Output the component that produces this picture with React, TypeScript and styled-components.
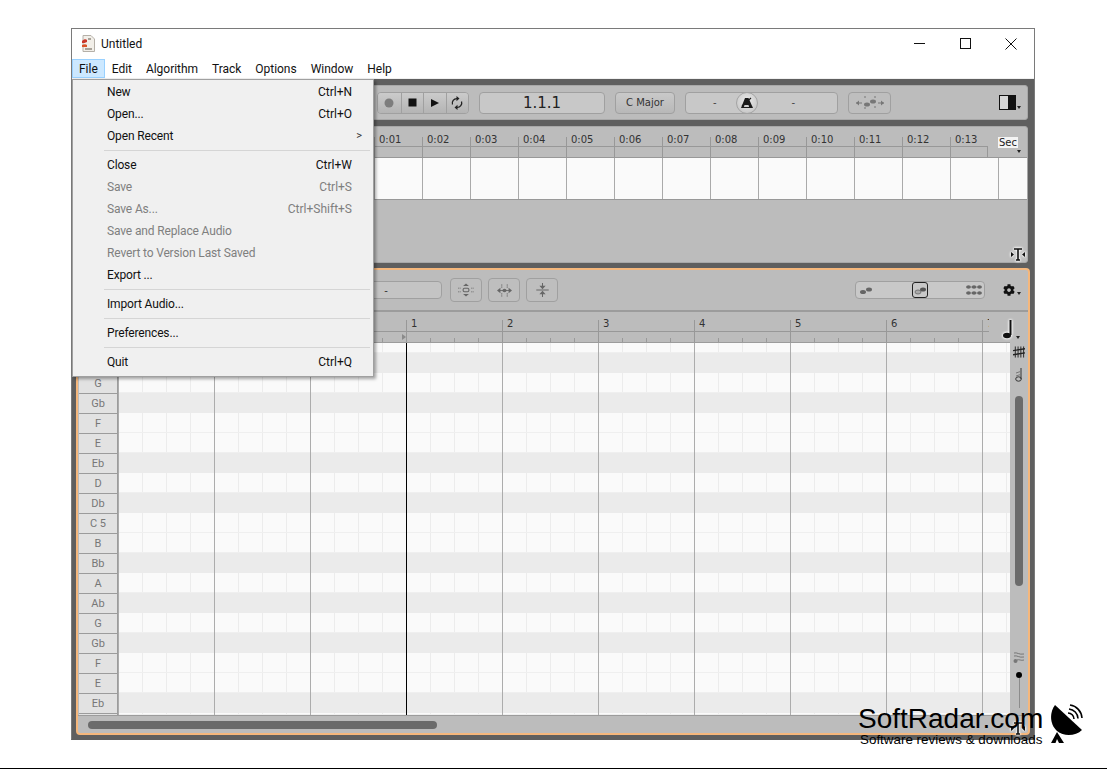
import React from 'react'
import styled, { createGlobalStyle } from 'styled-components'
import { FaCog } from 'react-icons/fa'

const GlobalStyle = createGlobalStyle`
    html, body { margin: 0; padding: 0; background: #fff; }
    body { font-family: Roboto, "Noto Sans", sans-serif; }
    * { box-sizing: border-box; }
`

const RULER_FONT = '"DejaVu Sans", sans-serif'

const Page = styled.div`
    position: relative;
    width: 1107px;
    height: 769px;
    padding: 28px 0 0 71px;
    overflow: hidden;
    border-bottom: 1px solid #000;
`
const Window = styled.div`
    position: relative;
    width: 964px;
    height: 712px;
    display: flex;
    flex-direction: column;
    border: 1px solid #7a7a7a;
    border-bottom-color: #5f5f5f;
    background: #fff;
`
const TitleBar = styled.div`
    height: 29px;
    display: flex;
    align-items: center;
    padding-left: 9px;
    font-size: 12px;
    color: #111;
`
const TitleText = styled.span`
    margin-left: 6px;
    flex: 1;
`
const WinButton = styled.div`
    width: 46px;
    height: 29px;
    display: flex;
    align-items: center;
    justify-content: center;
`
const MenuBar = styled.div`
    height: 21px;
    display: flex;
    align-items: flex-start;
    padding-top: 1px;
    font-size: 12px;
    letter-spacing: -0.03px;
    color: #111;
    border-bottom: 1px solid #f0f0f0;
`
const MenuTitle = styled.div<{ $open?: boolean }>`
    height: 19px;
    line-height: 18px;
    padding: 0 6px;
    border: 1px solid ${p => (p.$open ? '#99d1ff' : 'transparent')};
    background: ${p => (p.$open ? '#cce8ff' : 'transparent')};
`
const Workspace = styled.div`
    flex: 1;
    min-height: 0;
    display: flex;
    flex-direction: column;
    background: #5f5f5f;
    padding: 6px 6px 4px 5px;
`
const Panel = styled.div`
    background: #bcbcbc;
    border: 1px solid #a8a8a8;
    border-radius: 3px;
`
const Transport = styled(Panel)`
    height: 35px;
    display: flex;
    align-items: center;
    padding-left: 299px;
`
const ButtonGroup = styled.div`
    display: flex;
    height: 22px;
    border: 1px solid #a0a0a0;
    border-radius: 4px;
    overflow: hidden;
`
const GroupButton = styled.div`
    width: 22.500px;
    display: flex;
    align-items: center;
    justify-content: center;
    background: linear-gradient(#cbcbcb, #b4b4b4);
    & + & { border-left: 1px solid #a0a0a0; }
`
const Field = styled.div<{ $w: number; $ml: number }>`
    width: ${p => p.$w}px;
    margin-left: ${p => p.$ml}px;
    height: 22px;
    display: flex;
    align-items: center;
    justify-content: center;
    background: #c8c8c8;
    border: 1px solid #a0a0a0;
    border-radius: 4px;
    font-family: ${RULER_FONT};
    font-size: 10px;
    color: #333;
`
const PositionField = styled(Field)`
    font-size: 15px;
    color: #222;
`
const KeyField = styled(Field)`
    background: linear-gradient(#c9c9c9, #b8b8b8);
`
const TempoField = styled(Field)`
    justify-content: flex-start;
`
const Dash = styled.span<{ $l: number; $r: number }>`
    margin: 0 ${p => p.$r}px 0 ${p => p.$l}px;
    color: #444;
`
const Knob = styled.div`
    width: 22px;
    height: 22px;
    flex: none;
    border-radius: 50%;
    border: 1px solid #a4a4a4;
    background: radial-gradient(circle at 50% 40%, #ececec, #bdbdbd);
    display: flex;
    align-items: center;
    justify-content: center;
`
const ToolButton = styled.div<{ $w?: number; $h?: number; $ml: number }>`
    width: ${p => p.$w ?? 32}px;
    height: ${p => p.$h ?? 24}px;
    margin-left: ${p => p.$ml}px;
    display: flex;
    align-items: center;
    justify-content: center;
    border: 1px solid #a0a0a0;
    border-radius: 4px;
    background: #bebebe;
`
const PanelToggle = styled.div`
    margin-left: auto;
    margin-right: 6px;
    display: flex;
    align-items: flex-end;
    gap: 1px;
`
const Caret = styled.span`
    width: 0;
    height: 0;
    margin-bottom: 1px;
    border-left: 2.5px solid transparent;
    border-right: 2.5px solid transparent;
    border-top: 3px solid #222;
`
const Timeline = styled(Panel)`
    height: 137px;
    margin-top: 6px;
    display: flex;
    flex-direction: column;
`
const TimeRulerRow = styled.div`
    height: 30px;
    display: flex;
    padding-left: 296px;
`
const RulerCell = styled.div<{ $w: number; $top: number }>`
    position: relative;
    width: ${p => p.$w}px;
    flex: none;
    margin-top: ${p => p.$top}px;
    display: flex;
    flex-direction: column;
    border-left: 1px solid #989898;
    font-family: ${RULER_FONT};
    font-size: 10px;
    color: #333;
`
const CellLabel = styled.div<{ $h: number }>`
    height: ${p => p.$h}px;
    line-height: ${p => p.$h - 4}px;
    padding-left: 4px;
    white-space: nowrap;
`
const TickRow = styled.div<{ $ticks?: boolean; $end?: boolean }>`
    flex: 1;
    border-top: 1px solid #989898;
    border-right: ${p => (p.$end ? '1px solid #989898' : 'none')};
    ${p =>
        p.$ticks
            ? `background: linear-gradient(to right, transparent 23px, #999 23px) left bottom / 24px 4px repeat-x;`
            : ''}
`
const SecBox = styled.div`
    position: relative;
    flex: none;
    margin: 10px 0 0 10px;
    width: 20px;
    height: 11px;
    line-height: 11px;
    text-align: center;
    background: #f4f4f4;
    font-family: ${RULER_FONT};
    font-size: 10px;
    color: #222;
`
const SecCaret = styled(Caret)`
    position: absolute;
    right: -3px;
    top: 13px;
`
const AudioStrip = styled.div`
    height: 43px;
    background: #fafafa linear-gradient(to right, #aaa 1px, transparent 1px) 8px 0 / 48px 100% repeat-x;
    border-top: 1px solid #989898;
    border-bottom: 1px solid #989898;
`
const TimelineRest = styled.div`
    flex: 1;
    display: flex;
    justify-content: flex-end;
    align-items: flex-end;
    padding: 0 1px 0 0;
`
const Editor = styled.div`
    height: 467px;
    margin: 5px -2px 0 -1px;
    display: flex;
    flex-direction: column;
    background: #bcbcbc;
    border: 2px solid #f5b77c;
    border-radius: 4px;
`
const EditorBar = styled.div`
    height: 42px;
    flex: none;
    display: flex;
    align-items: center;
    border-bottom: 2px solid #9c9c9c;
`
const VelocityField = styled(Field)`
    height: 18px;
    background: #c4c4c4;
`
const ZoomSlider = styled.div`
    position: relative;
    margin-left: auto;
    width: 130px;
    height: 18px;
    background: #c8c8c8;
    border: 1px solid #a0a0a0;
    border-radius: 4px;
    display: flex;
    align-items: center;
    justify-content: space-between;
    padding: 0 2px 0 4px;
`
const SliderThumb = styled.div`
    position: absolute;
    left: 56px;
    top: 0;
    width: 16px;
    height: 16px;
    border: 1px solid #222;
    border-radius: 3px;
    display: flex;
    align-items: center;
    justify-content: center;
`
const GearWrap = styled.div`
    width: 43px;
    padding-left: 18px;
    display: flex;
    align-items: flex-end;
    gap: 2px;
    color: #111;
    font-size: 12px;
`
const BeatRulerRow = styled.div`
    height: 30px;
    flex: none;
    display: flex;
    padding-left: 40px;
`
const BeatRuler = styled.div`
    width: 871px;
    display: flex;
    overflow: hidden;
    flex: none;
`
const LoopMark = styled.span`
    position: absolute;
    right: 0;
    bottom: 2px;
    border-left: 4px solid #8a8a8a;
    border-top: 3px solid transparent;
    border-bottom: 3px solid transparent;
`
const NoteButton = styled.div`
    margin: 7px 0 0 13px;
    display: flex;
    align-items: flex-end;
    gap: 3px;
    height: 21px;
`
const EditorBody = styled.div`
    flex: 1;
    min-height: 0;
    display: flex;
`
const KeyColumn = styled.div`
    width: 40px;
    flex: none;
    padding-left: 1px;
    border-right: 1px solid #9c9c9c;
    border-top: 1px solid #9c9c9c;
    overflow: hidden;
    display: flex;
    flex-direction: column;
`
const PianoKey = styled.div<{ $h: number }>`
    height: ${p => p.$h}px;
    flex: none;
    display: flex;
    align-items: center;
    justify-content: center;
    background: #e2e2e2;
    border-bottom: 1px solid #9c9c9c;
    font-size: 11px;
    color: #777;
`
const Grid = styled.div`
    position: relative;
    width: 892px;
    flex: none;
    overflow: hidden;
    border-top: 1px solid #9c9c9c;
    display: flex;
    flex-direction: column;
    &::after {
        content: '';
        position: absolute;
        inset: 0;
        background: linear-gradient(to right, #acacac 1px, transparent 1px) 0 0 / 96px 100% repeat-x;
    }
`
const Stripe = styled.div<{ $h: number; $dark: boolean }>`
    height: ${p => p.$h}px;
    flex: none;
    background: ${p =>
        p.$dark
            ? '#ebebeb'
            : '#fafafa linear-gradient(to right, #ececec 1px, transparent 1px) 0 0 / 24px 100% repeat-x'};
    border-bottom: ${p => (p.$dark ? 'none' : '1px solid #efefef')};
`
const Playhead = styled.div`
    position: absolute;
    z-index: 1;
    left: 288px;
    top: 0;
    bottom: 0;
    width: 1px;
    background: #000;
`
const SideStrip = styled.div`
    flex: 1;
    display: flex;
    flex-direction: column;
    align-items: center;
    padding: 4px 0 7px 0;
    line-height: 0;
`
const SideIcon = styled.div<{ $mt: number }>`
    margin-top: ${p => p.$mt}px;
`
const VScroll = styled.div`
    width: 8px;
    height: 190px;
    margin-top: 14px;
    border-radius: 4px;
    background: #6b6b6b;
`
const VolumeDot = styled.div`
    width: 6px;
    height: 6px;
    margin-top: 8px;
    flex: none;
    border-radius: 50%;
    background: #000;
`
const VolumeLine = styled.div`
    flex: 1;
    width: 1px;
    background: #8c8c8c;
`
const EditorFoot = styled.div`
    height: 18px;
    flex: none;
    display: flex;
    justify-content: space-between;
    padding: 5px 2px 0 10px;
    border-top: 1px solid #9c9c9c;
`
const HScroll = styled.div`
    width: 349px;
    height: 8px;
    border-radius: 4px;
    background: #6b6b6b;
`
const Dropdown = styled.div`
    position: absolute;
    z-index: 5;
    left: 0;
    top: 50px;
    width: 302px;
    padding: 0 0 4px;
    background: #f0f0f0;
    border: 1px solid #a0a0a0;
    box-shadow: 2px 2px 3px rgba(0, 0, 0, 0.35);
    font-size: 12px;
`
const Item = styled.div<{ $off?: boolean }>`
    height: 22px;
    display: flex;
    align-items: center;
    justify-content: space-between;
    padding: 1px 21px 0 34px;
    color: ${p => (p.$off ? '#7f7f7f' : '#111')};
`
const ItemLabel = styled.span`
    letter-spacing: -0.15px;
`
const Chevron = styled.span`
    margin-right: -10px;
    font-size: 11px;
    color: #333;
`
const MenuSep = styled.div`
    height: 1px;
    margin: 4px 3px 2px 31px;
    background: #d5d5d5;
`
const Watermark = styled.div`
    position: absolute;
    z-index: 6;
    left: 858px;
    top: 703px;
    display: flex;
    font-family: "Liberation Sans", Arial, sans-serif;
    color: #000;
    line-height: 1;
`
const MarkText = styled.div`
    width: 192px;
`
const MarkTitle = styled.div`
    font-size: 28px;
    height: 28px;
    margin-top: 2px;
`
const MarkSub = styled.div`
    font-size: 13.400px;
    margin: 0 0 0 2px;
    white-space: nowrap;
`

const MENUS = ['Edit', 'Algorithm', 'Track', 'Options', 'Window', 'Help']

type Row = { label: string; keys?: string; off?: boolean; sub?: boolean } | 'sep'

const FILE_MENU: Row[] = [
    { label: 'New', keys: 'Ctrl+N' },
    { label: 'Open...', keys: 'Ctrl+O' },
    { label: 'Open Recent', sub: true },
    'sep',
    { label: 'Close', keys: 'Ctrl+W' },
    { label: 'Save', keys: 'Ctrl+S', off: true },
    { label: 'Save As...', keys: 'Ctrl+Shift+S', off: true },
    { label: 'Save and Replace Audio', off: true },
    { label: 'Revert to Version Last Saved', off: true },
    { label: 'Export ...' },
    'sep',
    { label: 'Import Audio...' },
    'sep',
    { label: 'Preferences...' },
    'sep',
    { label: 'Quit', keys: 'Ctrl+Q' },
]

const TIMES = ['0:01', '0:02', '0:03', '0:04', '0:05', '0:06', '0:07', '0:08', '0:09', '0:10', '0:11', '0:12', '0:13']
const BARS = ['', '', '', '1', '2', '3', '4', '5', '6', '7']

// from the top of the visible roll: [name, height of the stripe, is black key]
const KEYS: [string, number, boolean][] = [
    ['', 10, false], ['Ab', 20, true], ['G', 20, false], ['Gb', 20, true], ['F', 20, false], ['E', 20, false],
    ['Eb', 20, true], ['D', 20, false], ['Db', 20, true], ['C 5', 20, false], ['B', 20, false], ['Bb', 20, true],
    ['A', 20, false], ['Ab', 20, true], ['G', 20, false], ['Gb', 20, true], ['F', 20, false], ['E', 20, false],
    ['Eb', 20, true], ['', 2, false],
]

const HALO = { filter: 'drop-shadow(0 0 1px #fff) drop-shadow(0 0 1px #fff)' }

const SplitIcon = () => (
    <svg width="16" height="15" viewBox="0 0 16 15" style={HALO}>
        <path d="M4 2h8M8 2v11M6 13h4" stroke="#111" strokeWidth="1.6" fill="none" />
        <path d="M1 5l3 2.500L1 10zM15 5l-3 2.500 3 2.500z" fill="#111" />
    </svg>
)

function App() {
    return (
        <Page>
            <GlobalStyle />
            <Window>
                <TitleBar>
                    <svg width="14" height="17" viewBox="0 0 14 17">
                        <path d="M2 .5h8l3.500 3.500v12.500H2z" fill="#f2efe9" stroke="#b5b0a8" />
                        <path d="M1 6c2-2 4-2 5-1v2c-2 1-3 1-5 1z" fill="#c9382c" />
                        <path d="M1 10c2-1 4-1 5 0v2H1z" fill="#d9542b" />
                        <path d="M7 3h3v2H7zM4 13h7v2H4z" fill="#a9a39a" />
                    </svg>
                    <TitleText>Untitled</TitleText>
                    <WinButton>
                        <svg width="11" height="11"><path d="M0 5.500h11" stroke="#111" /></svg>
                    </WinButton>
                    <WinButton>
                        <svg width="11" height="11"><rect x=".5" y=".5" width="10" height="10" fill="none" stroke="#111" /></svg>
                    </WinButton>
                    <WinButton>
                        <svg width="12" height="12"><path d="M.5.500l11 11M11.500.500l-11 11" stroke="#111" /></svg>
                    </WinButton>
                </TitleBar>
                <MenuBar>
                    <MenuTitle $open>File</MenuTitle>
                    {MENUS.map(m => <MenuTitle key={m}>{m}</MenuTitle>)}
                </MenuBar>
                <Workspace>
                    <Transport>
                        <ButtonGroup>
                            <GroupButton>
                                <svg width="10" height="10"><circle cx="5" cy="5" r="4.500" fill="#7d7d7d" /></svg>
                            </GroupButton>
                            <GroupButton>
                                <svg width="9" height="9"><rect width="8" height="8" x=".5" y=".5" fill="#111" /></svg>
                            </GroupButton>
                            <GroupButton>
                                <svg width="10" height="10"><path d="M1 1l8 4-8 4z" fill="#111" /></svg>
                            </GroupButton>
                            <GroupButton>
                                <svg width="12" height="14" viewBox="0 0 12 14" fill="none" stroke="#222" strokeWidth="1.3">
                                    <path d="M1.500 8.500A4.500 4.500 0 0 1 6 2.600" />
                                    <path d="M10.500 5.500A4.500 4.500 0 0 1 6 11.400" />
                                    <path d="M5.500 0l3 2.600-3 2.600zM6.500 8.800l-3 2.600 3 2.600z" fill="#222" stroke="none" />
                                </svg>
                            </GroupButton>
                        </ButtonGroup>
                        <PositionField $w={126} $ml={10}>1.1.1</PositionField>
                        <KeyField $w={60} $ml={10}>C Major</KeyField>
                        <TempoField $w={153} $ml={10}>
                            <Dash $l={27} $r={19}>-</Dash>
                            <Knob>
                                <svg width="14" height="12" viewBox="0 0 14 12">
                                    <path d="M5 1h3.500L13 11H1z" fill="#1a1a1a" />
                                    <path d="M2 9l9-8" stroke="#1a1a1a" strokeWidth="1.2" />
                                    <path d="M4.500 8h4l.6 2H3.900z" fill="#ccc" />
                                </svg>
                            </Knob>
                            <Dash $l={34} $r={0}>-</Dash>
                        </TempoField>
                        <ToolButton $w={43} $h={22} $ml={10}>
                            <svg width="30" height="14" viewBox="0 0 30 14" fill="#777" stroke="#777">
                                <path d="M1 7h6M23 7h6" />
                                <path d="M1 7l3-2.500v5zM29 7l-3-2.500v5z" stroke="none" />
                                <ellipse cx="12" cy="8.500" rx="3" ry="2" stroke="none" />
                                <ellipse cx="18" cy="5.500" rx="3" ry="2" stroke="none" />
                                <path d="M10 0v3M10 11v3M20 0v2M20 10v3" strokeDasharray="2 1" />
                            </svg>
                        </ToolButton>
                        <PanelToggle>
                            <svg width="17" height="15">
                                <rect x=".5" y=".5" width="16" height="14" fill="#d6d6d6" stroke="#111" />
                                <rect x="9" y="1" width="7" height="13" fill="#111" />
                            </svg>
                            <Caret />
                        </PanelToggle>
                    </Transport>
                    <Timeline>
                        <TimeRulerRow>
                            {TIMES.map((t, i) => (
                                <RulerCell key={t} $w={i === 12 ? 38 : 48} $top={10}>
                                    <CellLabel $h={9}>{t}</CellLabel>
                                    <TickRow $end={i === 12} />
                                </RulerCell>
                            ))}
                            <SecBox>
                                Sec
                                <SecCaret />
                            </SecBox>
                        </TimeRulerRow>
                        <AudioStrip />
                        <TimelineRest>
                            <SplitIcon />
                        </TimelineRest>
                    </Timeline>
                    <Editor>
                        <EditorBar>
                            <VelocityField $w={112} $ml={252}>-</VelocityField>
                            <ToolButton $ml={8}>
                                <svg width="16" height="14" viewBox="0 0 22 18" fill="#666" stroke="#666">
                                    <path d="M0 6.500h4M18 6.500h4M0 11.500h4M18 11.500h4" strokeDasharray="2 1" />
                                    <rect x="7" y="6.500" width="8" height="5" rx="2" fill="none" strokeWidth="1.500" />
                                    <path d="M11 0l4 3.500H7zM11 18l4-3.500H7z" stroke="none" />
                                </svg>
                            </ToolButton>
                            <ToolButton $ml={6}>
                                <svg width="15" height="13" viewBox="0 0 22 18" fill="#666" stroke="#666">
                                    <path d="M7 0v5M15 0v5M7 13v5M15 13v5" strokeWidth="1.300" strokeDasharray="2 1" />
                                    <path d="M2 9h18" strokeWidth="1.300" />
                                    <path d="M0 9l5-4v8zM22 9l-5-4v8z" stroke="none" />
                                    <ellipse cx="11" cy="9" rx="3" ry="2.500" stroke="none" />
                                </svg>
                            </ToolButton>
                            <ToolButton $ml={6}>
                                <svg width="13" height="14" viewBox="0 0 16 18" fill="#666" stroke="#666">
                                    <path d="M0 9h16M8 0v4M8 14v4" strokeWidth="1.300" />
                                    <path d="M8 8L4 3.500h8zM8 10l-4 4.500h8z" stroke="none" />
                                </svg>
                            </ToolButton>
                            <ZoomSlider>
                                <svg width="14" height="10">
                                    <ellipse cx="3" cy="7" rx="3" ry="2" fill="#666" />
                                    <ellipse cx="9" cy="4.500" rx="3" ry="2" fill="#666" />
                                </svg>
                                <SliderThumb>
                                    <svg width="13" height="10">
                                        <ellipse cx="4" cy="7" rx="3" ry="2" fill="#aaa" stroke="#777" />
                                        <ellipse cx="9" cy="4.500" rx="3" ry="2" fill="#555" />
                                    </svg>
                                </SliderThumb>
                                <svg width="16" height="12" viewBox="0 0 16 12" fill="#666" stroke="#666">
                                    <path d="M0 3h16M0 9h16" strokeWidth=".6" />
                                    {[0, 5.500, 11].map(x => (
                                        <g key={x} stroke="none">
                                            <ellipse cx={x + 2.500} cy="3" rx="2.300" ry="1.800" />
                                            <ellipse cx={x + 2.500} cy="9" rx="2.300" ry="1.800" />
                                        </g>
                                    ))}
                                </svg>
                            </ZoomSlider>
                            <GearWrap>
                                <FaCog />
                                <Caret />
                            </GearWrap>
                        </EditorBar>
                        <BeatRulerRow>
                            <BeatRuler>
                                {BARS.map((b, i) => (
                                    <RulerCell key={i} $w={96} $top={8}>
                                        <CellLabel $h={11}>{b}</CellLabel>
                                        <TickRow $ticks />
                                        {i === 2 && <LoopMark />}
                                    </RulerCell>
                                ))}
                            </BeatRuler>
                            <NoteButton>
                                <svg width="11" height="21" viewBox="0 0 11 21" style={HALO}>
                                    <path d="M8.500 1v15" stroke="#111" strokeWidth="2" />
                                    <ellipse cx="5" cy="16.500" rx="4" ry="2.800" fill="#111" />
                                </svg>
                                <Caret />
                            </NoteButton>
                        </BeatRulerRow>
                        <EditorBody>
                            <KeyColumn>
                                {KEYS.map(([name, h], i) => <PianoKey key={i} $h={i === 0 ? 11 : h}>{name}</PianoKey>)}
                            </KeyColumn>
                            <Grid>
                                {KEYS.map(([, h, dark], i) => <Stripe key={i} $h={h} $dark={dark} />)}
                                <Playhead />
                            </Grid>
                            <SideStrip>
                                <SideIcon $mt={0}>
                                    <svg width="12" height="12" viewBox="0 0 13 12" stroke="#222" fill="none">
                                        <path d="M2.500 0v12M5.500 0v12M8.500 0v12M11.500 0v12" />
                                        <path d="M0 4.500l13-2M0 9l13-2" strokeWidth="1.500" />
                                    </svg>
                                </SideIcon>
                                <SideIcon $mt={10}>
                                    <svg width="8" height="14" viewBox="0 0 8 14" stroke="#333" fill="none">
                                        <path d="M6 0v11" />
                                        <ellipse cx="3.500" cy="11" rx="2.800" ry="2.200" />
                                        <path d="M1 8l6-2M1 5l6-2" stroke="#777" />
                                    </svg>
                                </SideIcon>
                                <VScroll />
                                <SideIcon $mt={66}>
                                    <svg width="12" height="12" viewBox="0 0 12 12" stroke="#777" fill="none">
                                        <path d="M1 1c3-1 5 2 10 1M1 4c3-1 5 2 10 1M4 8c2-1 4 1 7 0" />
                                        <circle cx="2.500" cy="9" r="2" fill="#777" stroke="none" />
                                    </svg>
                                </SideIcon>
                                <VolumeDot />
                                <VolumeLine />
                            </SideStrip>
                        </EditorBody>
                        <EditorFoot>
                            <HScroll />
                            <SplitIcon />
                        </EditorFoot>
                    </Editor>
                </Workspace>
                <Dropdown>
                    {FILE_MENU.map((row, i) =>
                        row === 'sep' ? (
                            <MenuSep key={i} />
                        ) : (
                            <Item key={i} $off={row.off}>
                                <ItemLabel>{row.label}</ItemLabel>
                                {row.keys && <span>{row.keys}</span>}
                                {row.sub && <Chevron>&gt;</Chevron>}
                            </Item>
                        ),
                    )}
                </Dropdown>
            </Window>
            <Watermark>
                <MarkText>
                    <MarkTitle>SoftRadar.com</MarkTitle>
                    <MarkSub>Software reviews &amp; downloads</MarkSub>
                </MarkText>
                <svg width="34" height="40" viewBox="0 0 34 40">
                    <path d="M5 2L32 27C26 33 14 34 7 28 0 22-1 10 5 2Z" />
                    <path d="M1 40L7 29l7 11H9L7 36 5.500 40Z" />
                    <path d="M18 10a6 6 0 0 1 6 6M19 6a10 10 0 0 1 9 9.500M20 2a14 14 0 0 1 12 13" fill="none" stroke="#000" strokeWidth="1.600" />
                </svg>
            </Watermark>
        </Page>
    )
}

export default App
